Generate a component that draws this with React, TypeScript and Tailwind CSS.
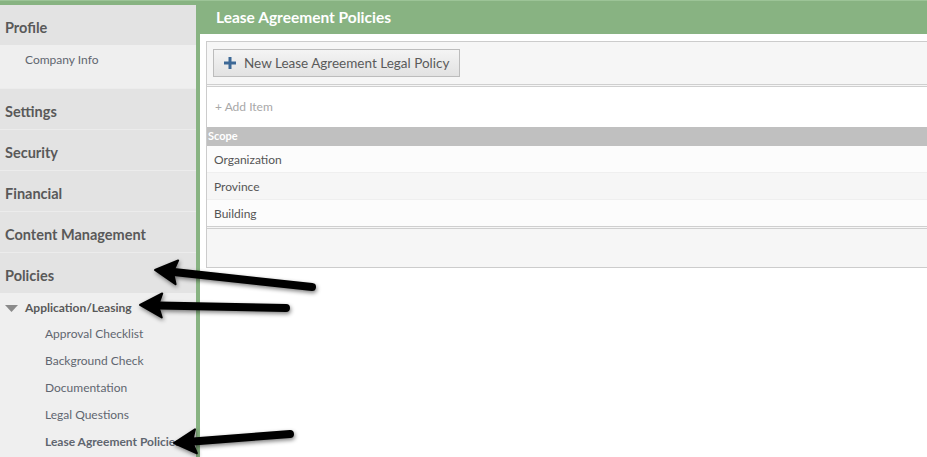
import React from "react";

type Pt = [number, number];

function Arrow({ tail, tip }: { tail: Pt; tip: Pt }) {
  const dx = tip[0] - tail[0];
  const dy = tip[1] - tail[1];
  const len = Math.hypot(dx, dy);
  const ux = dx / len;
  const uy = dy / len;
  const px = -uy;
  const py = ux;
  const hl = 22;
  const hw = 12;
  const bx = tip[0] - ux * hl;
  const by = tip[1] - uy * hl;
  const pts = `${tip[0]},${tip[1]} ${bx + px * hw},${by + py * hw} ${bx + ux * 4},${by + uy * 4} ${bx - px * hw},${by - py * hw}`;
  return (
    <g filter="url(#sh)">
      <line x1={tail[0]} y1={tail[1]} x2={bx + ux * 3} y2={by + uy * 3} stroke="#000" strokeWidth={8} strokeLinecap="round" />
      <polygon points={pts} fill="#000" stroke="#000" strokeWidth={2} strokeLinejoin="round" />
    </g>
  );
}

const headRow = "h-[41px] border-t border-[#ececec] bg-[#e3e3e3] flex items-center pt-[5px] pl-[5px] text-[14.5px] font-bold text-[#595959]";
const subItem = "h-[27px] flex items-center pl-[45px] text-[12px] text-[#5f6670] whitespace-nowrap";
const row = "flex items-center pl-[7px] pt-[2px] text-[12px] text-[#555]";

export default function App() {
  return (
    <div className="relative w-[927px] h-[457px] overflow-hidden bg-[#88b382] flex" style={{ fontFamily: "Lato, 'Open Sans', sans-serif" }}>
      <div className="absolute left-0 right-0 top-0 h-px bg-[#9cc497]" />
      {/* Sidebar */}
      <div className="w-[196px] mt-[5px] bg-[#efefef] flex flex-col overflow-hidden shrink-0">
        <div className="h-[40px] bg-[#e3e3e3] flex items-center pt-[5px] pl-[5px] text-[14.5px] font-bold text-[#595959]">Profile</div>
        <div className="h-[43px] bg-[#efefef] pl-[25px] pt-[6px] text-[12px] text-[#5f6670]">Company Info</div>
        <div className={headRow}>Settings</div>
        <div className={headRow}>Security</div>
        <div className={headRow}>Financial</div>
        <div className={headRow}>Content Management</div>
        <div className={headRow}>Policies</div>
        <div className="bg-[#efefef] pt-[2px]">
          <div className="h-[25px] flex items-center pl-[5px] text-[12px] font-bold text-[#595959]">
            <svg width="13" height="8" viewBox="0 0 13 8" className="mr-[7px] mt-[3px]">
              <polygon points="0,0 13,0 6.5,7" fill="#8a8a8a" />
            </svg>
            Application/Leasing
          </div>
          <div>
            <div className={subItem}>Approval Checklist</div>
            <div className={subItem}>Background Check</div>
            <div className={subItem}>Documentation</div>
            <div className={subItem}>Legal Questions</div>
            <div className={subItem + " font-bold text-[#4a4f57]"}>Lease Agreement Policies</div>
          </div>
        </div>
      </div>
      {/* Main */}
      <div className="ml-[4px] flex-1 flex flex-col min-w-0">
        <div className="h-[34px] shrink-0 flex items-center pl-[16px] pt-[1px] text-[15.5px] font-bold text-white">Lease Agreement Policies</div>
        <div className="flex-1 bg-white pl-[6px] pt-[7px]">
          <div className="mr-[-10px] border border-[#cccccc] flex flex-col">
            <div className="h-[45px] bg-[#f6f6f6] flex items-center pl-[6px] border-b-[3px] border-double border-[#cfcfcf]">
              <button className="h-[28px] px-[10px] flex items-center gap-[8px] border border-[#bcbcbc] bg-gradient-to-b from-[#f4f4f4] to-[#e2e2e2] text-[13.5px] text-[#5a5a5a]">
                <svg width="12" height="12" viewBox="0 0 12 12">
                  <rect x="4.5" y="0" width="3" height="12" fill="#3c6896" />
                  <rect x="0" y="4.5" width="12" height="3" fill="#3c6896" />
                </svg>
                New Lease Agreement Legal Policy
              </button>
            </div>
            <div className="h-[40px] bg-white flex items-center pl-[8px] text-[12px] text-[#a8a8a8]">+ Add Item</div>
            <div className="h-[19px] bg-[#c0c0c0] flex items-center pl-[1px] text-[11px] font-bold text-white">Scope</div>
            <div className={row + " h-[27px] bg-[#fcfcfc] border-b border-[#efefef]"}>Organization</div>
            <div className={row + " h-[27px] bg-[#f6f6f6] border-b border-[#efefef]"}>Province</div>
            <div className={row + " h-[26px] bg-[#fcfcfc]"}>Building</div>
            <div className="h-[41px] bg-[#f6f6f6] border-t-[3px] border-double border-[#cfcfcf]" />
          </div>
        </div>
      </div>
      {/* Annotation arrows */}
      <svg className="absolute inset-0 pointer-events-none" width="927" height="457">
        <defs>
          <filter id="sh" x="-20%" y="-50%" width="140%" height="200%">
            <feGaussianBlur in="SourceAlpha" stdDeviation="2" />
            <feOffset dx="1" dy="2" result="b" />
            <feComponentTransfer><feFuncA type="linear" slope="0.5" /></feComponentTransfer>
            <feMerge>
              <feMergeNode />
              <feMergeNode in="SourceGraphic" />
            </feMerge>
          </filter>
        </defs>
        <Arrow tail={[312, 287]} tip={[155, 270]} />
        <Arrow tail={[286, 308]} tip={[140, 305]} />
        <Arrow tail={[290, 434]} tip={[174, 443]} />
      </svg>
    </div>
  );
}
